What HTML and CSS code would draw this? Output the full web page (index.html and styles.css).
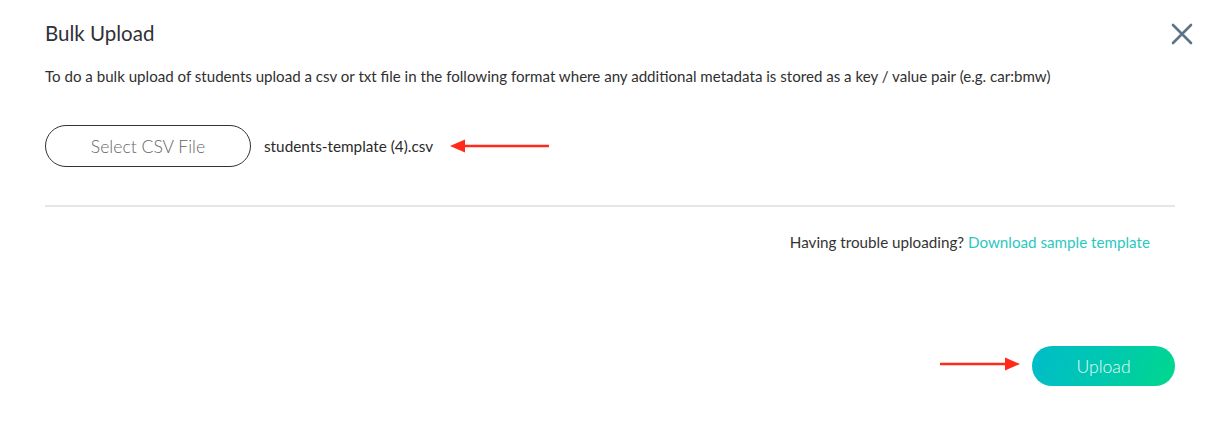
FILE: index.html
```html
<!DOCTYPE html>
<html>
<head>
<meta charset="utf-8">
<link rel="stylesheet" href="styles.css">
</head>
<body>
<div class="modal">
  <div class="header">
    <h1 class="title">Bulk Upload</h1>
    <button class="close" aria-label="Close">
      <svg width="22" height="22" viewBox="0 0 22 22"><path d="M2 2L20 20M20 2L2 20" stroke="#5f7387" stroke-width="2.6" stroke-linecap="round"/></svg>
    </button>
  </div>
  <p class="desc">To do a bulk upload of students upload a csv or txt file in the following format where any additional metadata is stored as a key / value pair (e.g. car:bmw)</p>
  <div class="file-row">
    <button class="select-btn">Select CSV File</button>
    <span class="file-name">students-template (4).csv</span>
    <svg class="arrow arrow-left" width="100" height="14" viewBox="0 0 100 14"><path d="M12 7H99" stroke="#ff2a1a" stroke-width="2.5"/><path d="M0 7L15 0.5V13.5Z" fill="#ff2a1a"/></svg>
  </div>
  <hr class="divider">
  <div class="help">Having trouble uploading? <a class="link" href="#">Download sample template</a></div>
  <div class="footer">
    <svg class="arrow arrow-right" width="80" height="14" viewBox="0 0 80 14"><path d="M0 7H68" stroke="#ff2a1a" stroke-width="2.5"/><path d="M80 7L65 0.5V13.5Z" fill="#ff2a1a"/></svg>
    <button class="upload-btn">Upload</button>
  </div>
</div>
</body>
</html>
```
FILE: styles.css
```css
* { box-sizing: border-box; }
html, body { margin: 0; background: #fff; }
body { font-family: "Lato", "Noto Sans", sans-serif; color: #333; }
.modal { padding: 20px 50px 0 45px; }
.header { display: flex; justify-content: space-between; align-items: center; height: 26px; }
.title { margin: 0; font-size: 20.5px; font-weight: 400; color: #2f3136; line-height: 26px; }
.close { border: 0; background: none; padding: 0; margin-right: -18px; margin-top: 2px; display: flex; cursor: pointer; }
.desc { margin: 20px 0 0; font-size: 15.1px; line-height: 20px; color: #303030; }
.file-row { display: flex; align-items: center; margin-top: 39px; }
.select-btn { width: 206px; height: 42px; border: 1px solid #333; border-radius: 21px; background: #fff; font-family: inherit; font-size: 17.6px; font-weight: 300; color: #666; padding: 0; }
.file-name { margin-left: 13px; font-size: 15.3px; color: #2a2a2a; }
.arrow-left { margin-left: 17px; }
.divider { border: 0; height: 2px; background: #e6e6e6; margin: 38px 0 0; }
.help { text-align: right; padding-right: 25px; margin-top: 25px; font-size: 15.2px; line-height: 20px; color: #333; }
.link { color: #2bc8c0; text-decoration: none; }
.footer { display: flex; justify-content: flex-end; align-items: center; margin-top: 94px; }
.arrow-right { margin-right: 12px; margin-top: -4px; }
.upload-btn { width: 143px; height: 40px; border: 0; border-radius: 20px; background: linear-gradient(110deg, #00bcc9 0%, #00c8b0 50%, #00d78d 100%); color: #e8fbf6; font-family: inherit; font-size: 17.6px; font-weight: 300; padding: 0; }
```
